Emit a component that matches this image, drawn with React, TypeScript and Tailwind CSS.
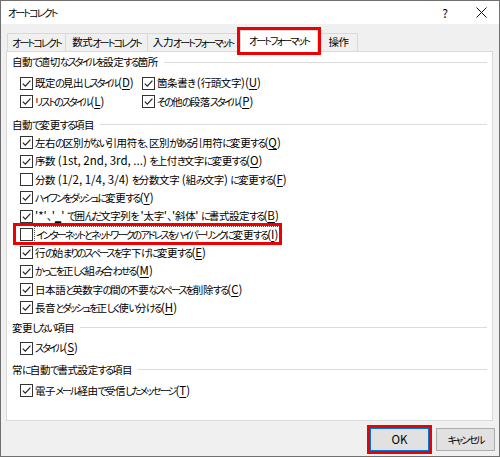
import React from "react";

const RE = /([\u3041-\u30ff]+)|([\u3000-\u303f\u4e00-\u9fff\uff00-\uffef]+)|([^\u3000-\u30ff\u4e00-\u9fff\uff00-\uffef]+)/g;

const J = ({ s }: { s: string }) => {
  const out: React.ReactNode[] = [];
  let m: RegExpExecArray | null;
  let i = 0;
  RE.lastIndex = 0;
  while ((m = RE.exec(s)) !== null) {
    if (m[1]) out.push(<span key={i++} className="text-[10px] tracking-[-1.9px]">{m[1]}</span>);
    else if (m[2]) out.push(<span key={i++} className="text-[10.5px] tracking-[-0.4px]">{m[2]}</span>);
    else out.push(<span key={i++} className="text-[11.5px]">{m[3]}</span>);
  }
  return <>{out}</>;
};

const A = ({ children }: { children: React.ReactNode }) => <span className="text-[11.5px]">{children}</span>;

const K = ({ c }: { c: string }) => <span className="underline underline-offset-[2px]">{c}</span>;

const Box = ({ checked }: { checked: boolean }) => (
  <span className="w-[13px] h-[13px] border border-[#333333] bg-white shrink-0 flex items-center justify-center">
    {checked && (
      <svg width="11" height="11" viewBox="0 0 11 11">
        <path d="M1.8 5.6 L4.3 8.1 L9.4 2.6" stroke="#222" strokeWidth="1.2" fill="none" />
      </svg>
    )}
  </span>
);

const L = ({ s, k }: { s: string; k: string }) => (
  <>
    <J s={s} />
    <A>(<K c={k} />)</A>
  </>
);

const Item = ({ checked, children }: { checked: boolean; children: React.ReactNode }) => (
  <div className="h-[18.33px] flex items-center gap-[2px] whitespace-nowrap">
    <Box checked={checked} />
    <span>{children}</span>
  </div>
);

const Header = ({ s }: { s: string }) => (
  <div className="h-[18px] flex items-center gap-[6px] whitespace-nowrap">
    <span><J s={s} /></span>
    <span className="flex-1 h-px bg-[#dcdcdc]" />
  </div>
);

const tab = "h-[18px] border border-b-0 border-[#d9d9d9] bg-[#f0f0f0] flex items-center justify-center whitespace-nowrap";

export default function App() {
  return (
    <div className="w-[500px] h-[457px] border border-[#707070] bg-[#f0f0f0] flex flex-col text-[11px] text-black [font-feature-settings:'palt'] font-['Noto_Sans_CJK_JP','Noto_Sans',sans-serif] leading-none">
      <div className="h-[23px] bg-white flex items-center pl-[7px] pr-[12px]">
        <span><J s="オートコレクト" /></span>
        <span className="ml-auto mr-[28px] text-[12px]">?</span>
        <svg width="11" height="11" viewBox="0 0 11 11">
          <path d="M0.5 0.5 L10.5 10.5 M10.5 0.5 L0.5 10.5" stroke="#111" strokeWidth="1" />
        </svg>
      </div>
      <div className="pl-[5px] pr-[6px] pt-[6px]">
        <div className="flex items-end h-[21px] pl-[1px]">
          <div className={`w-[59px] ${tab}`}><J s="オートコレクト" /></div>
          <div className={`-ml-px w-[83px] ${tab}`}><J s="数式オートコレクト" /></div>
          <div className={`-ml-px w-[96px] pr-[4px] ${tab}`}><J s="入力オートフォーマット" /></div>
          <div className="ml-[-3px] w-[78px] h-[22px] mb-[-1px] relative z-10 border border-b-0 border-[#d9d9d9] bg-white flex items-center justify-center whitespace-nowrap pb-[2px] outline-[3px] outline-solid outline-[#ee0000]"><J s="オートフォーマット" /></div>
          <div className={`-ml-px w-[41px] pl-[2px] ${tab}`}><J s="操作" /></div>
        </div>
        <div className="h-[370px] border border-[#d9d9d9] bg-white px-[5px] pt-[1px]">
          <Header s="自動で適切なスタイルを設定する箇所" />
          <div className="pl-[8px] mt-[3px]">
            <div className="flex">
              <div className="w-[122px]"><Item checked><L s="既定の見出しスタイル" k="D" /></Item></div>
              <Item checked><L s="箇条書き (行頭文字)" k="U" /></Item>
            </div>
            <div className="flex">
              <div className="w-[122px]"><Item checked><L s="リストのスタイル" k="L" /></Item></div>
              <Item checked><L s="その他の段落スタイル" k="P" /></Item>
            </div>
          </div>
          <div className="mt-[5px]"><Header s="自動で変更する項目" /></div>
          <div className="pl-[8px]">
            <Item checked><L s="左右の区別がない引用符を、区別がある引用符に変更する" k="Q" /></Item>
            <Item checked><L s="序数 (1st, 2nd, 3rd, ...) を上付き文字に変更する" k="O" /></Item>
            <Item checked={false}><L s="分数 (1/2, 1/4, 3/4) を分数文字 (組み文字) に変更する" k="F" /></Item>
            <Item checked><L s="ハイフンをダッシュに変更する" k="Y" /></Item>
            <Item checked>
              <A>'*'</A><J s="、" /><A>'<K c="_" />' </A><J s="で囲んだ文字列を" /><A> '</A><J s="太字" /><A>'</A><J s="、" /><A>'</A><J s="斜体" /><A>' </A><L s="に書式設定する" k="B" />
            </Item>
            <div className="h-[18.33px] flex">
              <div className="relative inline-flex items-center gap-[1px] whitespace-nowrap">
                <Box checked={false} />
                <span className="border border-dotted border-[#555] px-[1px] py-[2px]"><L s="インターネットとネットワークのアドレスをハイパーリンクに変更する" k="I" /></span>
                <span className="absolute left-[-7px] top-[-2px] bottom-[-1px] right-[-2px] border-[3px] border-[#ee0000]" />
              </div>
            </div>
            <Item checked><L s="行の始まりのスペースを字下げに変更する" k="E" /></Item>
            <Item checked><L s="かっこを正しく組み合わせる" k="M" /></Item>
            <Item checked><L s="日本語と英数字の間の不要なスペースを削除する" k="C" /></Item>
            <Item checked><L s="長音とダッシュを正しく使い分ける" k="H" /></Item>
          </div>
          <div className="mt-[2px]"><Header s="変更しない項目" /></div>
          <div className="pl-[8px] mt-[2px]">
            <Item checked><L s="スタイル" k="S" /></Item>
          </div>
          <div className="mt-[3px]"><Header s="常に自動で書式設定する項目" /></div>
          <div className="pl-[8px] mt-[3px]">
            <Item checked><L s="電子メール経由で受信したメッセージ" k="T" /></Item>
          </div>
        </div>
      </div>
      <div className="flex justify-end gap-[7px] pr-[4px] mt-[7px]">
        <button className="w-[59px] h-[23px] border border-[#0078d7] bg-[#e1e1e1] flex items-center justify-center outline-[3px] outline-solid outline-[#ee0000] text-[11.5px]">OK</button>
        <button className="w-[59px] h-[23px] border border-[#adadad] bg-[#e1e1e1] flex items-center justify-center"><J s="キャンセル" /></button>
      </div>
    </div>
  );
}
